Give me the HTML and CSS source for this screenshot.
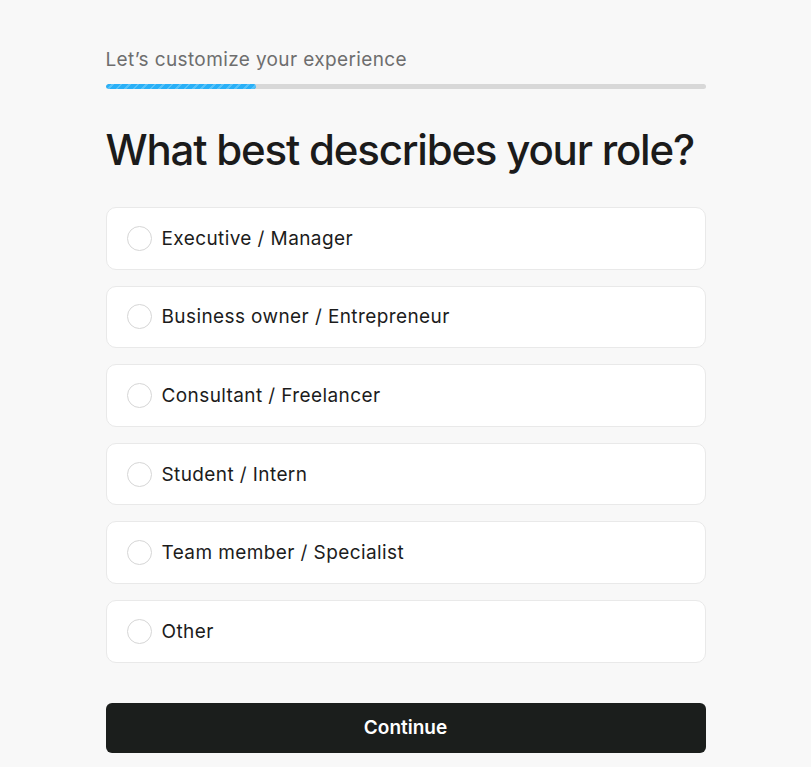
FILE: index.html
```html
<!DOCTYPE html>
<html>
<head>
<meta charset="utf-8">
<link rel="stylesheet" href="styles.css">
</head>
<body>
<main class="page">
  <p class="eyebrow">Let’s customize your experience</p>
  <div class="progress"><div class="progress-fill" style="width:25%"></div></div>
  <h1 class="title">What best describes your role?</h1>
  <div class="options">
    <label class="option"><span class="radio"></span><span class="option-text">Executive / Manager</span></label>
    <label class="option"><span class="radio"></span><span class="option-text">Business owner / Entrepreneur</span></label>
    <label class="option"><span class="radio"></span><span class="option-text">Consultant / Freelancer</span></label>
    <label class="option"><span class="radio"></span><span class="option-text">Student / Intern</span></label>
    <label class="option"><span class="radio"></span><span class="option-text">Team member / Specialist</span></label>
    <label class="option"><span class="radio"></span><span class="option-text">Other</span></label>
  </div>
  <button class="continue">Continue</button>
</main>
</body>
</html>
```
FILE: styles.css
```css
html, body {
  margin: 0;
  padding: 0;
  background: #f8f8f8;
}
body {
  font-family: Inter, "Noto Sans", sans-serif;
  color: #1a1a1a;
}
.page {
  width: 600px;
  margin: 0 auto;
  padding-top: 47px;
  display: flex;
  flex-direction: column;
}
.eyebrow {
  margin: 0;
  font-size: 19px;
  line-height: 26px;
  letter-spacing: 0.38px;
  color: #6e6e6e;
}
.progress {
  margin-top: 11px;
  height: 5px;
  border-radius: 3px;
  background: #d8d8d8;
  overflow: hidden;
}
.progress-fill {
  height: 100%;
  border-radius: 3px;
  background: repeating-linear-gradient(135deg, #2ab0f7 0 4px, #55c2fa 4px 6px);
}
.title {
  margin: 36px 0 0;
  font-size: 42px;
  line-height: 50px;
  font-weight: 500;
  letter-spacing: -1.2px;
  color: #1b1b1b;
}
.options {
  margin-top: 32px;
  display: flex;
  flex-direction: column;
  gap: 16px;
}
.option {
  box-sizing: border-box;
  height: 62.6px;
  background: #fff;
  border: 1px solid #e9e9e9;
  border-radius: 10px;
  display: flex;
  align-items: center;
  padding-left: 20px;
  gap: 10px;
}
.radio {
  width: 23px;
  height: 23px;
  border: 1px solid #d6d6d6;
  border-radius: 50%;
  flex: none;
}
.option-text {
  font-size: 19px;
  letter-spacing: 0.4px;
  color: #1c1c1c;
}
.continue {
  margin-top: 40.4px;
  height: 50px;
  border: none;
  border-radius: 6px;
  background: #1b1e1c;
  color: #fff;
  font-family: Inter, sans-serif;
  font-size: 19px;
  font-weight: 600;
  padding-top: 1px;
}
```
